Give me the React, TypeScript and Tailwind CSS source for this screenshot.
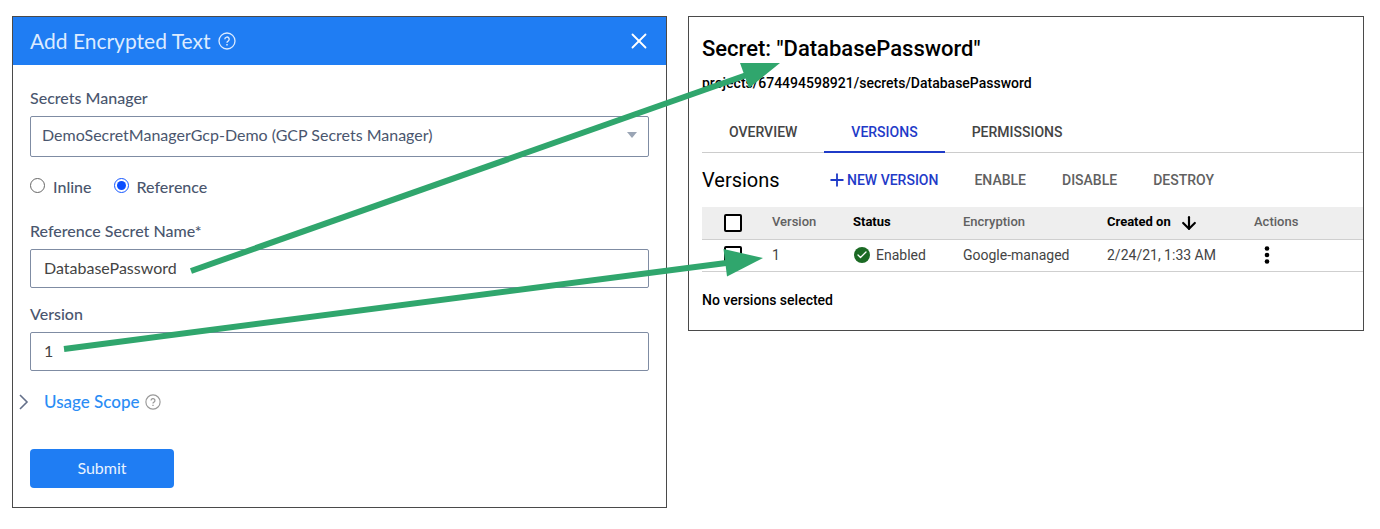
import type { ReactNode } from "react";
import { ArrowDown, Check, Plus, X } from "lucide-react";

function HelpIcon({ className }: { className: string }) {
  return (
    <svg viewBox="0 0 18 18" fill="none" stroke="currentColor" className={className} aria-hidden="true">
      <circle cx="9" cy="9" r="8" strokeWidth="1.3" />
      <path d="M6.8 7.3a2.2 2.2 0 1 1 3.3 1.9c-.8.4-1.1.8-1.1 1.5" strokeWidth="1.4" />
      <path d="M9 12v1.4" strokeWidth="1.5" />
    </svg>
  );
}

function Field({ id, label, value, className }: { id: string; label: string; value: string; className: string }) {
  return (
    <div className={className}>
      <label htmlFor={id} className="block leading-5 font-medium">
        {label}
      </label>
      <input
        id={id}
        defaultValue={value}
        className="mt-2 block h-[39px] w-full rounded-xs border border-[#7f8ca3] bg-white px-[13px] pb-0.5 text-[#444444] outline-none"
      />
    </div>
  );
}

function SecretForm() {
  return (
    <form
      onSubmit={(e) => e.preventDefault()}
      className="border border-[#4a4a4a] bg-white pb-[19px] font-['Lato',sans-serif] text-base text-[#4a566e]"
    >
      <header className="flex h-12 items-center bg-[#1f7df3] pr-3.5 pb-px pl-[17px] text-[#dcebff]">
        <h2 className="text-[21px] font-normal">Add Encrypted Text</h2>
        <HelpIcon className="ml-2 size-[18px]" />
        <button type="button" aria-label="Close" className="ml-auto text-white">
          <X className="size-[26px]" strokeWidth={1.7} />
        </button>
      </header>

      <div className="px-[17px]">
        <div className="pt-[23px]">
          <label htmlFor="manager" className="block leading-5 font-medium">
            Secrets Manager
          </label>
          <div className="relative mt-2">
            <select
              id="manager"
              className="block h-[41px] w-full appearance-none rounded-xs border border-[#7f8ca3] bg-white px-[11px] pb-1 outline-none"
            >
              <option>DemoSecretManagerGcp-Demo (GCP Secrets Manager)</option>
            </select>
            <svg viewBox="0 0 10 6" className="pointer-events-none absolute top-4 right-3 h-1.5 w-2.5 fill-[#9aa5b5]">
              <path d="M0 0h10L5 6z" />
            </svg>
          </div>
        </div>

        <div className="mt-5 flex gap-[22px] leading-5 font-medium">
          <label className="flex gap-2">
            <input
              type="radio"
              name="mode"
              className="mt-px size-[15px] appearance-none rounded-full border border-[#666666] bg-white"
            />
            Inline
          </label>
          <label className="flex gap-2">
            <input
              type="radio"
              name="mode"
              defaultChecked
              className="mt-px size-[15px] appearance-none rounded-full border border-[#1557ff] bg-[#0b4dff] bg-clip-content p-[2px]"
            />
            Reference
          </label>
        </div>

        <Field id="secret" label="Reference Secret Name*" value="DatabasePassword" className="mt-6" />
        <Field id="version" label="Version" value="1" className="mt-4" />

        <div className="mt-[19px] -ml-3 flex items-center">
          <button type="button" className="flex items-center gap-3.5 text-[17px] leading-6 font-medium text-[#2a8df5]">
            <svg viewBox="0 0 12 18" fill="none" className="h-[18px] w-3 stroke-[#64708a]" aria-hidden="true">
              <path d="M2 2l7 7-7 7" strokeWidth="1.6" />
            </svg>
            Usage Scope
          </button>
          <HelpIcon className="ml-1.5 size-4 text-[#999999]" />
        </div>

        <button type="submit" className="mt-[35px] h-[39px] w-36 rounded-sm bg-[#1f7df3] pb-0.5 text-[#e8f2ff]">
          Submit
        </button>
      </div>
    </form>
  );
}

function Tab({ children, active = false }: { children: ReactNode; active?: boolean }) {
  return (
    <button
      type="button"
      role="tab"
      aria-selected={active}
      className={
        active
          ? "-mb-px border-b-2 border-[#1f3bc8] px-[27px] text-[#1f3bc8]"
          : "-mb-px border-b-2 border-transparent px-[27px] text-[#444444]"
      }
    >
      {children}
    </button>
  );
}

const boxClass = "block size-[18px] appearance-none rounded-xs border-2 border-black bg-white";

function VersionsPanel() {
  return (
    <section className="self-start border border-[#4a4a4a] bg-white pb-5 pl-[13px] font-['Roboto',sans-serif] text-sm text-black">
      <h1 className="pt-4 text-[22px] leading-8 font-medium">Secret: "DatabasePassword"</h1>
      <p className="mt-2 leading-5 font-medium">projects/674494598921/secrets/DatabasePassword</p>

      <div role="tablist" className="mt-[19px] flex h-[41px] border-b border-[#cccccc] font-medium">
        <Tab>OVERVIEW</Tab>
        <Tab active>VERSIONS</Tab>
        <Tab>PERMISSIONS</Tab>
      </div>

      <div className="flex h-[54px] items-center font-medium text-[#616161]">
        <h2 className="w-[127px] text-xl font-normal text-black">Versions</h2>
        <button type="button" className="flex items-center gap-0.5 text-[#1f3bc8]">
          <Plus className="size-4 scale-125" strokeWidth={2.2} />
          NEW VERSION
        </button>
        <button type="button" className="ml-9">
          ENABLE
        </button>
        <button type="button" className="ml-9">
          DISABLE
        </button>
        <button type="button" className="ml-9">
          DESTROY
        </button>
      </div>

      <table className="w-full table-fixed text-left">
        <thead>
          <tr className="h-8 border-b border-[#cfcfcf] bg-[#eeeeee] text-[13px] text-[#616161]">
            <th className="w-[70px] pl-[22px]">
              <input type="checkbox" aria-label="Select all versions" className={boxClass} />
            </th>
            <th className="w-[81px] font-medium">Version</th>
            <th className="w-[110px] font-bold text-black">Status</th>
            <th className="w-36 font-medium">Encryption</th>
            <th className="w-[147px] font-bold text-black">
              <span className="flex items-center gap-2">
                Created on
                <ArrowDown className="size-5" strokeWidth={2.6} />
              </span>
            </th>
            <th className="font-medium">Actions</th>
          </tr>
        </thead>
        <tbody>
          <tr className="h-8 border-b border-[#cfcfcf] text-[#444444]">
            <td className="pl-[22px]">
              <input type="checkbox" aria-label="Select version 1" className={boxClass} />
            </td>
            <td>1</td>
            <td>
              <span className="flex items-center gap-1.5 pl-px">
                <span className="flex size-4 items-center justify-center rounded-full bg-[#1b6a24] text-white">
                  <Check className="size-3" strokeWidth={2.6} />
                </span>
                Enabled
              </span>
            </td>
            <td>Google-managed</td>
            <td>2/24/21, 1:33 AM</td>
            <td className="pl-[9px]">
              <button type="button" aria-label="Actions for version 1" className="block">
                <svg viewBox="0 0 8 20" className="h-5 w-2 fill-black">
                  <circle cx="4" cy="3.5" r="2.3" />
                  <circle cx="4" cy="10" r="2.3" />
                  <circle cx="4" cy="16.5" r="2.3" />
                </svg>
              </button>
            </td>
          </tr>
        </tbody>
      </table>

      <p className="mt-[18px] leading-5 font-medium">No versions selected</p>
    </section>
  );
}

function MappingArrows() {
  return (
    <svg
      viewBox="0 0 1380 529"
      preserveAspectRatio="none"
      className="pointer-events-none absolute top-0 left-0 h-[529px] w-full fill-[#30a66d] stroke-[#30a66d]"
      aria-hidden="true"
    >
      <path d="M191 271L748 74.5" strokeWidth="6" />
      <path d="M780 63h-40l9 25z" stroke="none" />
      <path d="M64 349L730 262.5" strokeWidth="6" />
      <path d="M763 258l-39.500-9 3.500 27.500z" stroke="none" />
    </svg>
  );
}

export default function App() {
  return (
    <main className="relative grid grid-cols-[655fr_676fr] gap-[21px] bg-white pt-4 pr-4 pb-[22px] pl-3">
      <SecretForm />
      <VersionsPanel />
      <MappingArrows />
    </main>
  );
}
